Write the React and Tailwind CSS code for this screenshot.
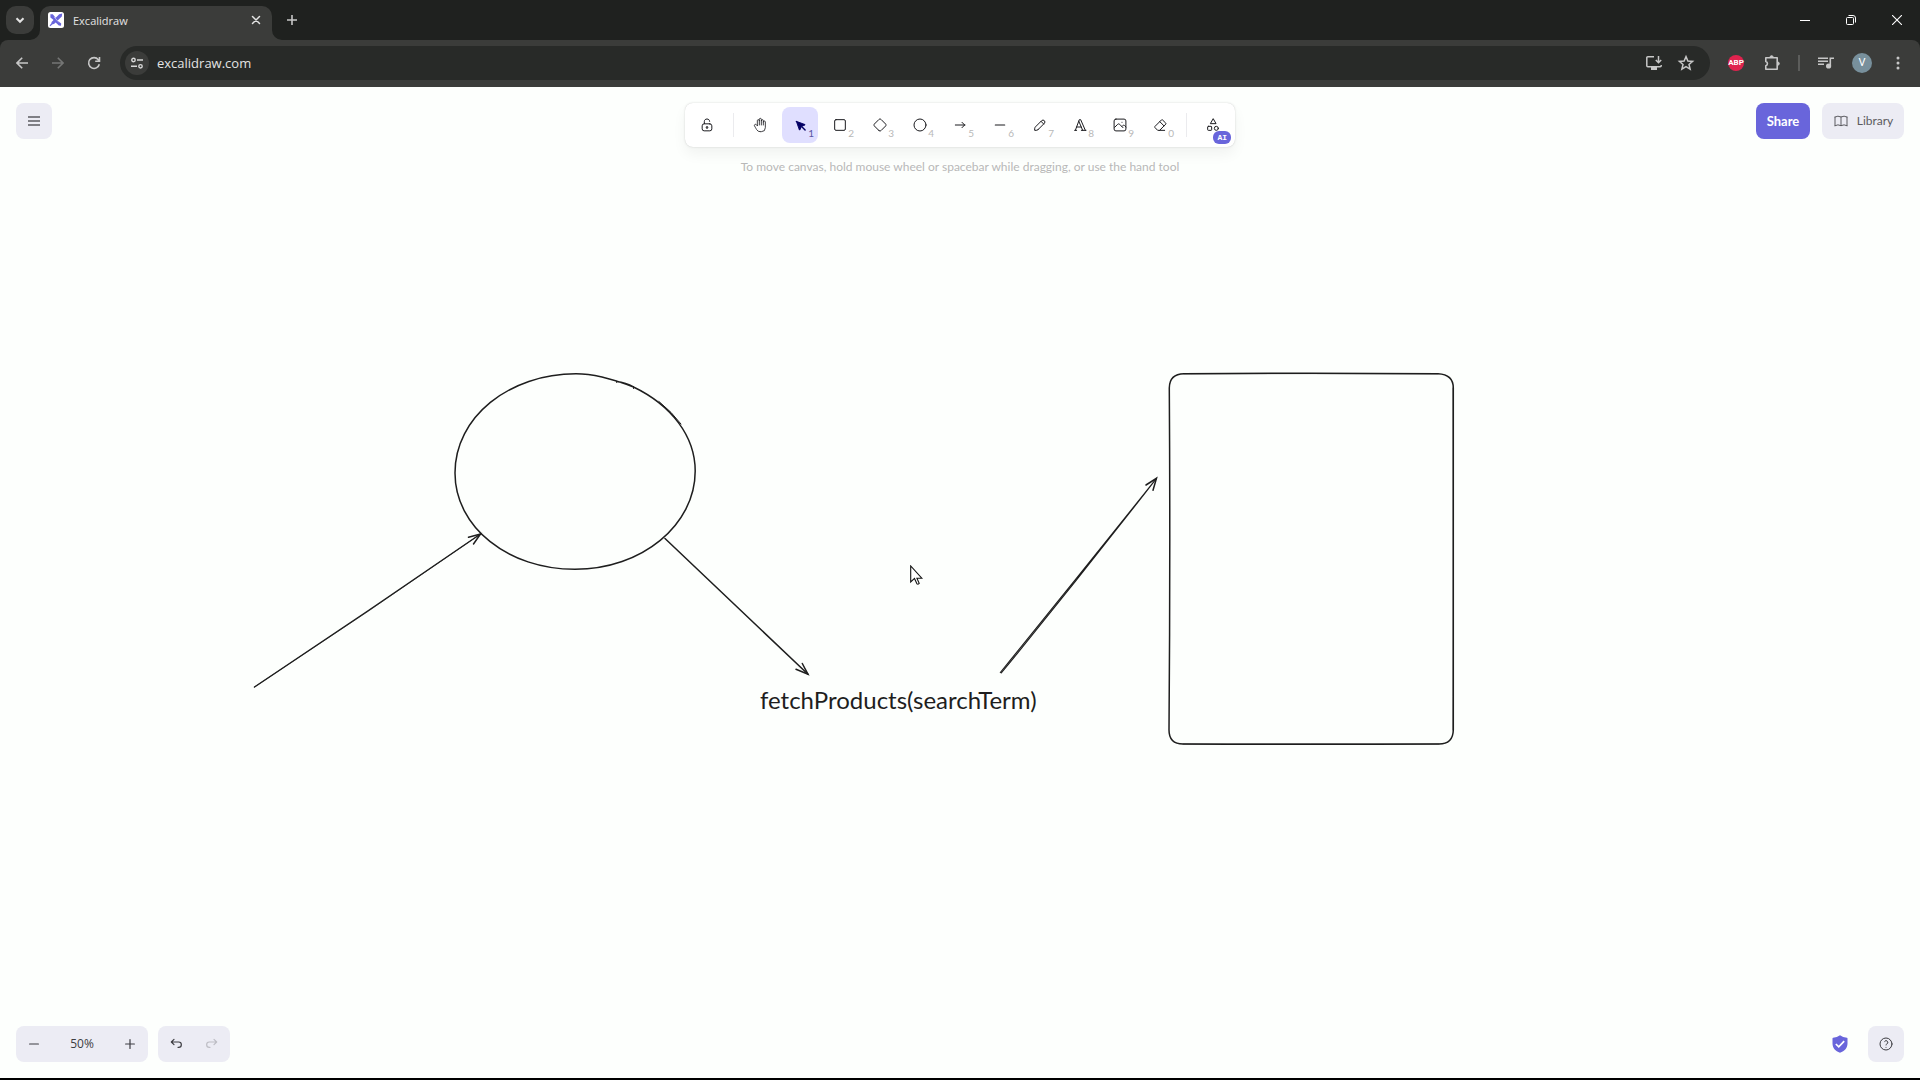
import React from 'react';

const Icon = ({ size = 16, box = 24, stroke = 1.5, className = '', children }) => (
  <svg
    width={size}
    height={size}
    viewBox={`0 0 ${box} ${box}`}
    fill="none"
    stroke="currentColor"
    strokeWidth={stroke}
    strokeLinecap="round"
    strokeLinejoin="round"
    className={className}
    aria-hidden="true"
  >
    {children}
  </svg>
);

const LockOpenIcon = () => (
  <Icon box={20} stroke={1.25}>
    <path d="M13.542 8.542H6.458a2.5 2.5 0 0 0-2.5 2.5v3.75a2.5 2.5 0 0 0 2.5 2.5h7.084a2.5 2.5 0 0 0 2.5-2.5v-3.75a2.5 2.5 0 0 0-2.5-2.5Z" />
    <path d="M10 13.958a1.042 1.042 0 1 0 0-2.083 1.042 1.042 0 0 0 0 2.083Z" />
    <path d="M6.667 8.333V5.417C6.667 3.806 8.159 2.5 10 2.5c1.841 0 3.333 1.306 3.333 2.917" />
  </Icon>
);

const HandIcon = () => (
  <Icon stroke={1.25}>
    <path d="M8 13v-7.5a1.5 1.5 0 0 1 3 0v6.5" />
    <path d="M11 5.5v-2a1.5 1.5 0 1 1 3 0v8.5" />
    <path d="M14 5.5a1.5 1.5 0 0 1 3 0v6.5" />
    <path d="M17 7.5a1.5 1.5 0 0 1 3 0v8.5a6 6 0 0 1 -6 6h-2h.208a6 6 0 0 1 -5.012 -2.7a69.74 69.74 0 0 1 -.196 -.3c-.312 -.479 -1.407 -2.388 -3.286 -5.728a1.5 1.5 0 0 1 .536 -2.022a1.867 1.867 0 0 1 2.28 .28l1.47 1.47" />
  </Icon>
);

const SelectionIcon = () => (
  <Icon box={22} stroke={1.25}>
    <path
      fill="currentColor"
      d="M6 6l4.153 11.793a.365 .365 0 0 0 .331 .207a.366 .366 0 0 0 .332 -.207l2.184 -4.793l4.787 -1.994a.355 .355 0 0 0 .213 -.323a.355 .355 0 0 0 -.213 -.323l-11.787 -4.36z"
    />
    <path d="M13.5 13.5l4.5 4.5" strokeWidth="2" />
  </Icon>
);

const RectangleIcon = () => (
  <Icon>
    <rect x="4" y="4" width="16" height="16" rx="2" />
  </Icon>
);

const DiamondIcon = () => (
  <Icon>
    <path d="M10.5 20.4l-6.9 -6.9c-.781 -.781 -.781 -2.219 0 -3l6.9 -6.9c.781 -.781 2.219 -.781 3 0l6.9 6.9c.781 .781 .781 2.219 0 3l-6.9 6.9c-.781 .781 -2.219 .781 -3 0z" />
  </Icon>
);

const EllipseIcon = () => (
  <Icon>
    <circle cx="12" cy="12" r="9" />
  </Icon>
);

const ArrowIcon = () => (
  <Icon>
    <path d="M5 12h14M15 16l4-4M15 8l4 4" />
  </Icon>
);

const LineIcon = () => (
  <Icon box={20}>
    <path d="M4.167 10h11.666" />
  </Icon>
);

const PencilIcon = () => (
  <Icon box={20} stroke={1.25}>
    <path d="m7.643 15.69 7.774-7.773a2.357 2.357 0 1 0-3.334-3.334L4.31 12.357a3.333 3.333 0 0 0-.977 2.357v1.953h1.953c.884 0 1.732-.352 2.357-.977Z" />
    <path d="m11.25 5.417 3.333 3.333" />
  </Icon>
);

const TextIcon = () => (
  <Icon>
    <path d="M4 20h3M14 20h7M6.9 15h6.9M10.2 6.3L16 20" />
    <path d="M5 20L11 4h2l7 16" />
  </Icon>
);

const ImageIcon = () => (
  <Icon box={20} stroke={1.25}>
    <path d="M12.5 6.667h.01" />
    <path d="M4.91 2.625h10.18a2.284 2.284 0 0 1 2.285 2.284v10.182a2.284 2.284 0 0 1-2.284 2.284H4.909a2.284 2.284 0 0 1-2.284-2.284V4.909a2.284 2.284 0 0 1 2.284-2.284Z" />
    <path d="m3.333 12.917 3.75-3.75c.774-.745 1.726-.745 2.5 0l4.167 4.166" />
    <path d="m12.5 11.667.833-.834c.774-.744 1.726-.744 2.5 0l1.667 1.667" />
  </Icon>
);

const EraserIcon = () => (
  <Icon>
    <path d="M19 20h-10.5l-4.21 -4.3a1 1 0 0 1 0 -1.41l10 -10a1 1 0 0 1 1.41 0l5 5a1 1 0 0 1 0 1.41l-9.2 9.3" />
    <path d="M18 13.3l-6.3 -6.3" />
  </Icon>
);

const ShapesIcon = () => (
  <Icon>
    <path d="M12 3l-4 7h8z" />
    <circle cx="17" cy="17" r="3" />
    <rect x="4" y="14" width="6" height="6" rx="1" />
  </Icon>
);

const tools = [
  { name: 'Selection', key: '1', icon: SelectionIcon, active: true },
  { name: 'Rectangle', key: '2', icon: RectangleIcon },
  { name: 'Diamond', key: '3', icon: DiamondIcon },
  { name: 'Ellipse', key: '4', icon: EllipseIcon },
  { name: 'Arrow', key: '5', icon: ArrowIcon },
  { name: 'Line', key: '6', icon: LineIcon },
  { name: 'Draw', key: '7', icon: PencilIcon },
  { name: 'Text', key: '8', icon: TextIcon },
  { name: 'Insert image', key: '9', icon: ImageIcon },
  { name: 'Eraser', key: '0', icon: EraserIcon },
];

const TitleBar = () => (
  <header className="flex h-10 items-stretch bg-[#1f211f] pl-1.5 text-[#e3e3e3]">
    <button aria-label="Search tabs" className="mt-1.5 flex size-7 items-center justify-center rounded-[10px] bg-[#3b3c3a]">
      <Icon size={14} stroke={3.5}>
        <path d="M6 9l6 6 6-6" strokeLinecap="butt" strokeLinejoin="miter" />
      </Icon>
    </button>
    <div className="relative ml-1.5 mt-1.5 flex w-[232px] items-start rounded-t-[10px] bg-[#3b3c3a] px-2 pt-1.5">
      <svg className="absolute -left-2.5 bottom-0" width="10" height="10" aria-hidden="true">
        <path d="M10 0v10H0A10 10 0 0 0 10 0Z" fill="#3b3c3a" />
      </svg>
      <svg className="absolute -right-2.5 bottom-0" width="10" height="10" aria-hidden="true">
        <path d="M0 0v10h10A10 10 0 0 1 0 0Z" fill="#3b3c3a" />
      </svg>
      <svg width="16" height="16" viewBox="0 0 16 16" aria-hidden="true">
        <rect width="16" height="16" rx="2.5" fill="#fff" />
        <path d="M2.4 2.2 4.8 2.2 7 5 9.6 8.4 13.2 11.4 13 13.8 10.8 13.4 7.4 10.200 5 7.400 2.400 5.400Z" fill="#6965db" />
        <path d="M14.2 1.6 13.8 4.4 6 12 4.6 12.2 2.2 14.2 1.6 13.6 3.4 11.2 3.6 10 11.2 2.2Z" fill="#6965db" />
        <path d="M6.2 5l4.800 5.400" stroke="#fff" strokeWidth=".5" />
      </svg>
      <span className="ml-[9px] flex-1 font-['Open_Sans',sans-serif] text-[11px] leading-[18px]">Excalidraw</span>
      <button aria-label="Close tab" className="flex size-4 items-center justify-center">
        <Icon size={12} stroke={3}>
          <path d="M5 5l14 14M19 5L5 19" />
        </Icon>
      </button>
    </div>
    <button aria-label="New tab" className="ml-1.5 mt-1.5 flex size-7 items-center justify-center text-[#c7c7c7]">
      <svg width="12" height="12" viewBox="0 0 12 12" stroke="currentColor" strokeWidth="1.6" aria-hidden="true">
        <path d="M6 1v10M1 6h10" />
      </svg>
    </button>
    <div className="ml-auto flex text-white">
      <button aria-label="Minimize" className="flex w-[46px] items-center justify-center">
        <svg width="10" height="10" stroke="currentColor" aria-hidden="true">
          <path d="M0 5.5h10" />
        </svg>
      </button>
      <button aria-label="Restore" className="flex w-[46px] items-center justify-center">
        <svg width="10" height="10" stroke="currentColor" fill="none" aria-hidden="true">
          <rect x=".5" y="2.5" width="7" height="7" rx="1" />
          <path d="M2.5 .5H7A2.5 2.5 0 0 1 9.5 3v4.5" />
        </svg>
      </button>
      <button aria-label="Close" className="flex w-[46px] items-center justify-center">
        <svg width="10" height="10" stroke="currentColor" strokeWidth="1.1" aria-hidden="true">
          <path d="M0 0l10 10M10 0L0 10" />
        </svg>
      </button>
    </div>
  </header>
);

const NavButton = ({ label, className = '', children }) => (
  <button aria-label={label} className={`flex h-9 w-9 items-center justify-center ${className}`}>
    {children}
  </button>
);

const AddressBar = () => (
  <div className="bg-[#1f211f]">
    <nav className="flex h-[47px] items-center rounded-t-lg bg-[#3b3c3a] px-1 pb-px text-[#c7c7c7]">
      <NavButton label="Back">
        <svg width="12" height="12" viewBox="0 0 12 12" fill="none" stroke="currentColor" strokeWidth="1.6" aria-hidden="true">
          <path d="M12 6H1.2M6.2 .8L1 6l5.2 5.2" />
        </svg>
      </NavButton>
      <NavButton label="Forward" className="text-[#757675]">
        <svg width="12" height="12" viewBox="0 0 12 12" fill="none" stroke="currentColor" strokeWidth="1.6" aria-hidden="true">
          <path d="M0 6h10.8M5.8 .8L11 6l-5.2 5.2" />
        </svg>
      </NavButton>
      <NavButton label="Reload">
        <svg width="14" height="14" viewBox="0 0 14 14" fill="none" stroke="currentColor" strokeWidth="1.6" aria-hidden="true">
          <path d="M12.3 8.2A5.4 5.4 0 1 1 11.3 3.7L12.4 5M12.5 1v4.3H8.2" />
        </svg>
      </NavButton>
      <div className="ml-2 flex h-[34px] flex-1 items-center rounded-full bg-[#282a28] pl-[5px] pr-2">
        <button aria-label="View site information" className="flex size-6 items-center justify-center rounded-full bg-[#3b3c3a] text-[#d8d8d8]">
          <svg width="12" height="12" viewBox="0 0 12 12" fill="none" stroke="currentColor" strokeWidth="1.4" aria-hidden="true">
            <circle cx="2.5" cy="3" r="1.7" />
            <path d="M6 3h6M0 9.3h6" />
            <circle cx="9.5" cy="9.3" r="1.7" />
          </svg>
        </button>
        <input
          aria-label="Address and search bar"
          defaultValue="excalidraw.com"
          className="ml-2 min-w-0 flex-1 bg-transparent font-['Open_Sans',sans-serif] text-[13px] leading-5 text-[#e3e3e3] outline-none"
        />
        <button aria-label="Install" className="flex h-8 w-8 items-center justify-center">
          <svg width="16" height="14" viewBox="0 0 16 14" fill="none" stroke="currentColor" strokeWidth="1.5" aria-hidden="true">
            <path d="M8 .8H1.8a1 1 0 0 0-1 1v8a1 1 0 0 0 1 1h12.4a1 1 0 0 0 1-1V9" />
            <path d="M12.5 0v6.5M9.8 4l2.7 2.7L15.2 4" />
            <path d="M5 12.5h6" strokeWidth="3" />
          </svg>
        </button>
        <button aria-label="Bookmark this tab" className="flex h-8 w-8 items-center justify-center">
          <Icon size={18} stroke={2}>
            <path
              strokeLinejoin="miter"
              d="M12 3.5l2.5 5.8 6.3.6-4.8 4.1 1.5 6.2-5.5-3.3-5.5 3.3L8 14 3.2 9.9l6.3-.6Z"
            />
          </Icon>
        </button>
      </div>
      <NavButton label="Adblock Plus" className="ml-2">
        <span className="flex size-4 items-center justify-center rounded-full bg-[#e0234e] font-['Roboto',sans-serif] text-[8px] font-bold leading-4 text-white">
          ABP
        </span>
      </NavButton>
      <NavButton label="Extensions">
        <svg width="18" height="18" viewBox="0 0 18 18" fill="none" stroke="currentColor" strokeWidth="1.6" aria-hidden="true">
          <path
            strokeLinejoin="round"
            d="M2.8 3.8h11.4v11.4H2.8v-3.4a2.3 2.3 0 0 0 0-4.4Z"
          />
          <path d="M7 3.3a1.6 1.6 0 0 1 3.2 0ZM14.7 8a1.6 1.6 0 0 1 0 3.2Z" fill="currentColor" strokeWidth="1" />
        </svg>
      </NavButton>
      <div className="mx-2 h-4 w-0.5 bg-[#5c5d5b]" />
      <NavButton label="Media controls">
        <svg width="16" height="14" viewBox="0 0 16 14" fill="none" stroke="currentColor" strokeWidth="1.6" aria-hidden="true">
          <path d="M0 2.3h10M0 5.3h10M0 8.3h6M16 2.3h-3.7v7.5" />
          <circle cx="10.6" cy="10" r="1.8" fill="currentColor" />
        </svg>
      </NavButton>
      <NavButton label="Profile">
        <span className="flex size-5 items-center justify-center rounded-full bg-[#78909c] font-['Roboto',sans-serif] text-[11px] leading-5 text-white">
          V
        </span>
      </NavButton>
      <NavButton label="Customize and control">
        <svg width="4" height="14" fill="currentColor" aria-hidden="true">
          <circle cx="2" cy="2" r="1.5" />
          <circle cx="2" cy="7" r="1.5" />
          <circle cx="2" cy="12" r="1.5" />
        </svg>
      </NavButton>
    </nav>
  </div>
);

const ToolButton = ({ tool }) => {
  const ToolIcon = tool.icon;
  return (
    <button
      aria-label={tool.name}
      className={`relative flex size-9 items-center justify-center rounded-lg ${
        tool.active ? 'bg-[#e0dfff] text-[#030064]' : 'text-[#1b1b1f]'
      }`}
    >
      <ToolIcon />
      <span
        className={`absolute bottom-1 right-1 text-[10px] leading-3 ${
          tool.active ? 'text-[#5b57a3]' : 'text-[#b8b8b8]'
        }`}
      >
        {tool.key}
      </span>
    </button>
  );
};

const Toolbar = () => (
  <div className="flex flex-col items-center">
    <div className="flex gap-1 rounded-lg bg-white p-1 shadow-[0_0_1px_rgba(0,0,0,0.17),0_0_3px_rgba(0,0,0,0.08),0_7px_14px_rgba(0,0,0,0.05)]">
      <button aria-label="Keep selected tool active" className="flex size-9 items-center justify-center text-[#1b1b1f]">
        <LockOpenIcon />
      </button>
      <div className="mx-1 my-1.5 w-px bg-[#ebebee]" />
      <button aria-label="Hand" className="flex size-9 items-center justify-center text-[#1b1b1f]">
        <HandIcon />
      </button>
      {tools.map((tool) => (
        <ToolButton key={tool.key} tool={tool} />
      ))}
      <div className="mx-1 my-1.5 w-px bg-[#ebebee]" />
      <button aria-label="More tools" className="relative flex size-9 items-center justify-center text-[#1b1b1f]">
        <ShapesIcon />
        <span className="absolute -bottom-px right-0 rounded-md bg-[#6965db] px-1 font-['Liberation_Mono',monospace] text-[8px] font-bold leading-[13px] text-white">
          AI
        </span>
      </button>
    </div>
    <p className="mt-2.5 text-[12px] leading-5 text-[#b8b8b8]">
      To move canvas, hold mouse wheel or spacebar while dragging, or use the hand tool
    </p>
  </div>
);

const IslandButton = ({ label, className = '', children }) => (
  <button aria-label={label} className={`flex size-9 items-center justify-center ${className}`}>
    {children}
  </button>
);

const Footer = () => (
  <footer className="relative mt-auto flex text-[#3d3d42]">
    <div className="flex items-center rounded-lg bg-[#ececf4]">
      <IslandButton label="Zoom out">
        <Icon box={20}>
          <path d="M4.5 10h11" />
        </Icon>
      </IslandButton>
      <button aria-label="Reset zoom" className="w-[60px] text-center font-['Open_Sans',sans-serif] text-[12px] leading-5">
        50%
      </button>
      <IslandButton label="Zoom in">
        <Icon box={20}>
          <path d="M10 4.5v11M4.5 10h11" />
        </Icon>
      </IslandButton>
    </div>
    <div className="ml-2.5 flex rounded-lg bg-[#ececf4]">
      <IslandButton label="Undo">
        <Icon box={20}>
          <path d="M7.5 10.833 4.167 7.5 7.5 4.167M4.167 7.5h9.166a3.333 3.333 0 0 1 0 6.667H12.5" />
        </Icon>
      </IslandButton>
      <IslandButton label="Redo" className="text-[#bdbdc4]">
        <Icon box={20}>
          <path d="M12.5 10.833 15.833 7.5 12.5 4.167M15.833 7.5H6.667a3.333 3.333 0 1 0 0 6.667H7.5" />
        </Icon>
      </IslandButton>
    </div>
    <div className="ml-auto flex gap-2.5">
      <a href="#encryption" aria-label="End-to-end encrypted" className="flex size-9 items-center justify-center">
        <svg width="20" height="20" viewBox="0 0 24 24" aria-hidden="true">
          <path
            fill="#6965db"
            d="M12 1.5Q15.5 4.2 20.3 4.5Q21 4.6 21 5.3V11.5C21 16.8 17.6 20.6 12 22.5C6.4 20.6 3 16.8 3 11.5V5.3Q3 4.6 3.7 4.5Q8.5 4.2 12 1.5Z"
          />
          <path d="M7 12l3.5 3.5 6.5-7" fill="none" stroke="#fff" strokeWidth="2" />
        </svg>
      </a>
      <IslandButton label="Help" className="rounded-lg bg-[#ececf4]">
        <Icon>
          <circle cx="12" cy="12" r="9" />
          <path d="M12 17v.01" />
          <path d="M12 13.5a1.5 1.5 0 0 1 1-1.5 2.6 2.6 0 1 0-3-4" />
        </Icon>
      </IslandButton>
    </div>
  </footer>
);

const Scene = () => (
  <div className="absolute inset-0 overflow-hidden">
    <svg
      width="100%"
      height="100%"
      fill="none"
      stroke="#1e1e1e"
      strokeWidth="1.5"
      strokeLinecap="round"
      role="img"
      aria-label="Drawing"
    >
      <g transform="translate(0 -87)">
        <path d="M576 373.8C509 373.8 455 417 455 473C455 527 508 569.3 575 569.3C642 569.3 695.2 525 695.2 471C695.2 436 671 405 633.5 387Q626 382.5 616.5 381.500M576 373.800C596 373.800 614 379.500 633.500 387" />
        <path d="M616.5 382.3v-1M633.5 388.5v-2M659 401.5Q672 412 681 424" strokeWidth="1" />

        <path d="M254.5 687Q368 611.5 480.5 534" />
        <path d="M254.5 687Q369 612 480.5 534" strokeWidth=".6" />
        <path d="M468.5 537.3L480.5 534L473.5 544" />

        <path d="M665 538.5L808 674.3" />
        <path d="M796 669.3L808 674.3L802.3 663.5" />

        <path d="M1000.3 672.5Q1079 575.5 1156.5 478.3M1001.3 673Q1080 577 1156.5 478.3" strokeWidth="1.1" />
        <path d="M1146 485L1156.5 478.3L1153 490.3" />

        <path d="M1184 373.8Q1310 372.6 1438 373.8Q1453.3 374.5 1453.3 388Q1452.6 560 1453.3 730Q1453 744 1439 744Q1310 744.6 1183 744Q1169 744 1169 730Q1170.4 560 1169.3 388Q1169.5 374 1184 373.8Z" />
        <path d="M1184 373.8Q1310 373.4 1438 373.8M1453 388Q1453.4 600 1453 730M1439 744Q1310 743.8 1183 744" strokeWidth=".7" />
      </g>
    </svg>
    <p className="absolute left-[760px] top-[598px] text-[24px] leading-[30px] text-[#1e1e1e]">
      fetchProducts(searchTerm)
    </p>
    <svg className="absolute left-[910px] top-[478px]" width="14" height="21" viewBox="0 0 14 21" aria-hidden="true">
      <path d="M.7 1v16l3.8-3.6 2.5 5.5q1 .8 2.2-.5l-2.3-5.2h4.9Z" fill="#fff" stroke="#111" strokeWidth="1.1" />
    </svg>
  </div>
);

export default function App() {
  return (
    <div className="flex min-h-screen flex-col border-b-2 border-black bg-[#fdfffd] font-['Lato',sans-serif]">
      <TitleBar />
      <AddressBar />
      <main className="relative flex flex-1 flex-col p-4">
        <Scene />
        <div className="relative grid grid-cols-[1fr_auto_1fr] items-start">
          <button aria-label="Main menu" className="flex size-9 items-center justify-center rounded-lg bg-[#ececf4] text-[#5b5b60]">
            <svg width="12" height="12" stroke="currentColor" strokeWidth="1.5" aria-hidden="true">
              <path d="M0 2h12M0 6h12M0 10h12" />
            </svg>
          </button>
          <Toolbar />
          <div className="flex gap-3 justify-self-end">
            <button className="h-9 w-[54px] rounded-lg bg-[#6965db] text-[13px] font-bold leading-5 text-white">Share</button>
            <button className="flex h-9 w-[82px] items-center justify-center gap-2 rounded-lg bg-[#ececf4] text-[12px] leading-5 text-[#5b5b60]">
              <Icon>
                <path d="M3 19a9 9 0 0 1 9 0a9 9 0 0 1 9 0" />
                <path d="M3 6a9 9 0 0 1 9 0a9 9 0 0 1 9 0" />
                <path d="M3 6v13M12 6v13M21 6v13" />
              </Icon>
              Library
            </button>
          </div>
        </div>
        <Footer />
      </main>
    </div>
  );
}
